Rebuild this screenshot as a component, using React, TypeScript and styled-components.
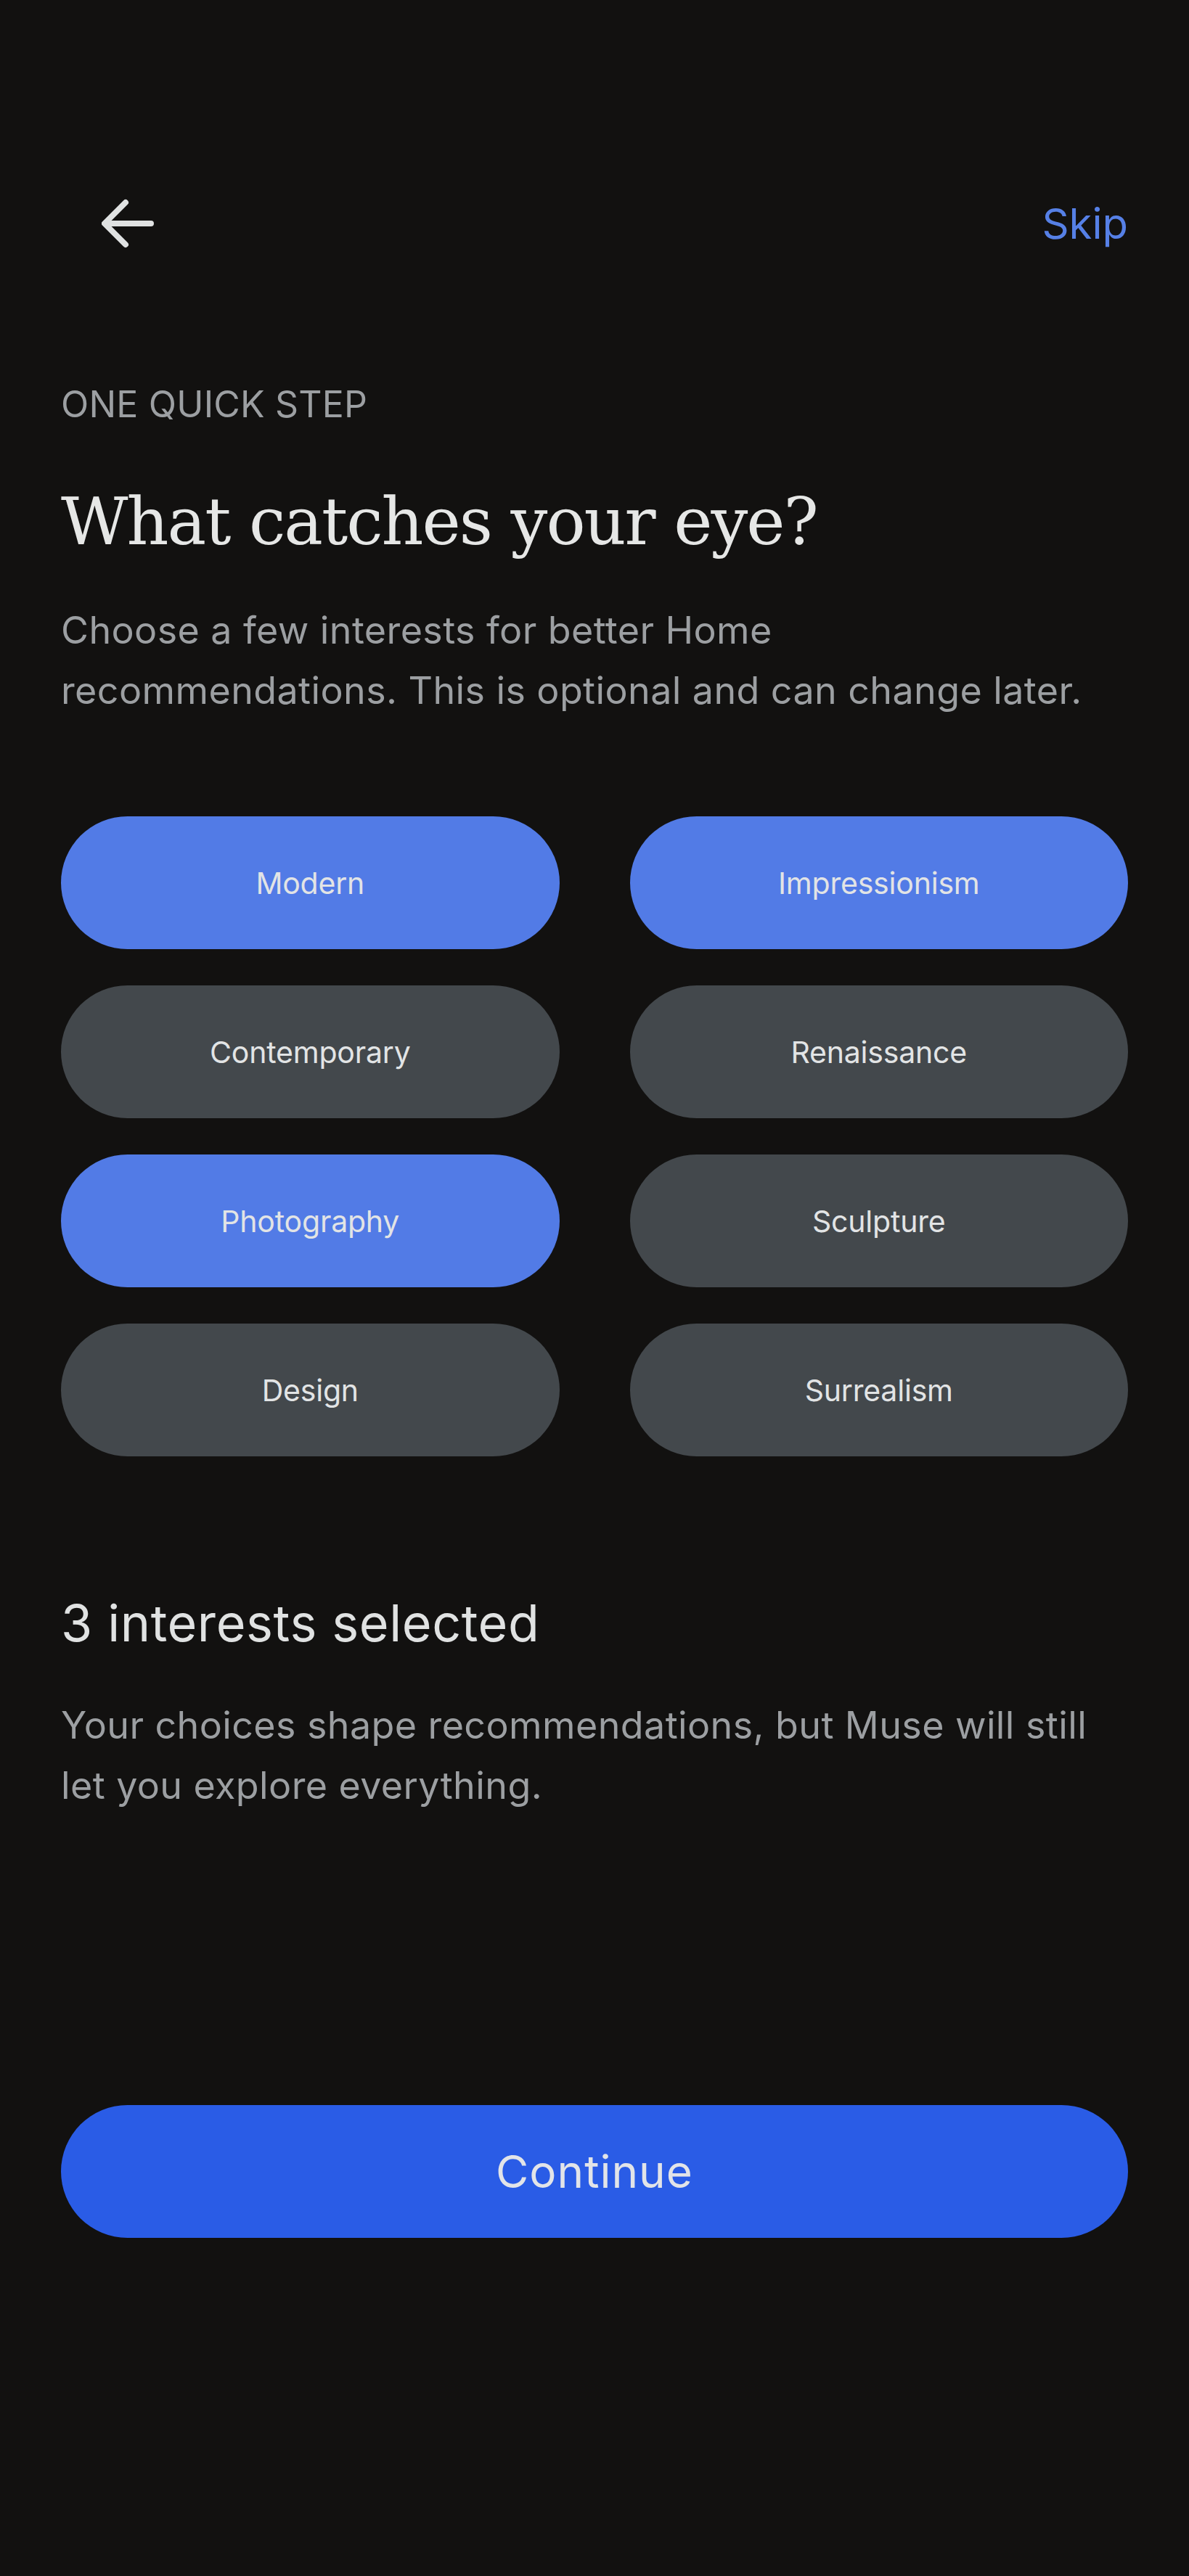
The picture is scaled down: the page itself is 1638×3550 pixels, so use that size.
import styled, { createGlobalStyle } from "styled-components";
import { useState } from "react";

const GlobalStyle = createGlobalStyle`
  html, body {
    margin: 0;
    padding: 0;
    background: #121110;
  }
  * {
    box-sizing: border-box;
  }
`;

const Screen = styled.div`
  width: 1638px;
  min-height: 3550px;
  background: #121110;
  padding: 248px 84px 0;
  font-family: Inter, "Noto Sans", sans-serif;
  color: #e0e2e2;
  display: flex;
  flex-direction: column;
`;

const Header = styled.div`
  display: flex;
  align-items: center;
  justify-content: space-between;
  height: 120px;
`;

const BackButton = styled.button`
  background: none;
  border: none;
  padding: 0;
  margin-left: 56px;
  width: 72px;
  height: 72px;
  cursor: pointer;
  color: #e0e2e2;
  display: flex;
`;

const SkipButton = styled.button`
  background: none;
  border: none;
  padding: 0;
  font-family: inherit;
  font-size: 58px;
  line-height: 70px;
  color: #5680e6;
  cursor: pointer;
  letter-spacing: 0;
`;

const Eyebrow = styled.div`
  margin-top: 159px;
  font-size: 50px;
  line-height: 60px;
  color: #9c9fa2;
  letter-spacing: 0.2px;
`;

const Title = styled.h1`
  margin: 77px 0 0;
  font-family: "DejaVu Serif", "Liberation Serif", serif;
  font-weight: 400;
  font-size: 90px;
  line-height: 110px;
  color: #e6e7e6;
  letter-spacing: -2px;
`;

// both paragraphs wrap a little before the column edge
const Lead = styled.p<{ $top: number }>`
  margin: ${(p) => p.$top}px 0 0;
  max-width: 1445px;
  font-size: 52px;
  line-height: 83px;
  color: #9c9fa2;
  letter-spacing: 0.4px;
`;

const ChipGrid = styled.div`
  margin-top: 132px;
  display: grid;
  grid-template-columns: 1fr 1fr;
  column-gap: 97px;
  row-gap: 50px;
`;

const Chip = styled.button<{ $on: boolean }>`
  height: 183px;
  border: none;
  border-radius: 92px;
  background: ${(p) => (p.$on ? "#527be6" : "#43484c")};
  color: #e2e4e5;
  font-family: inherit;
  font-size: 41px;
  letter-spacing: -0.2px;
  cursor: pointer;
  display: flex;
  align-items: center;
  justify-content: center;
`;

const Count = styled.h2`
  margin: 188px 0 0;
  font-size: 70px;
  font-weight: 400;
  line-height: 84px;
  color: #e0e2e2;
  letter-spacing: 0.6px;
`;

const ContinueButton = styled.button`
  margin-top: 399px;
  height: 183px;
  border: none;
  border-radius: 92px;
  background: #2a5ce6;
  color: #e2e4e8;
  font-family: inherit;
  font-size: 62px;
  letter-spacing: 1px;
  cursor: pointer;
`;

const interests = [
  "Modern",
  "Impressionism",
  "Contemporary",
  "Renaissance",
  "Photography",
  "Sculpture",
  "Design",
  "Surrealism",
];

const BackArrow = () => (
  <svg width="72" height="72" viewBox="0 0 72 72" fill="none">
    <path
      d="M68 36H6M33 7L4 36l29 29"
      stroke="currentColor"
      strokeWidth="8"
      strokeLinecap="round"
      strokeLinejoin="round"
    />
  </svg>
);

export default function App() {
  const [picked, setPicked] = useState<string[]>([
    "Modern",
    "Impressionism",
    "Photography",
  ]);

  const toggle = (name: string) => {
    setPicked((cur) =>
      cur.includes(name) ? cur.filter((n) => n !== name) : [...cur, name]
    );
  };

  return (
    <>
      <GlobalStyle />
      <Screen>
        <Header>
          <BackButton aria-label="Back">
            <BackArrow />
          </BackButton>
          <SkipButton>Skip</SkipButton>
        </Header>
        <Eyebrow>ONE QUICK STEP</Eyebrow>
        <Title>What catches your eye?</Title>
        <Lead $top={53}>
          Choose a few interests for better Home recommendations. This is
          optional and can change later.
        </Lead>
        <ChipGrid>
          {interests.map((name) => (
            <Chip
              key={name}
              $on={picked.includes(name)}
              onClick={() => toggle(name)}
            >
              {name}
            </Chip>
          ))}
        </ChipGrid>
        <Count>{picked.length} interests selected</Count>
        <Lead $top={57}>
          Your choices shape recommendations, but Muse will still let you
          explore everything.
        </Lead>
        <ContinueButton>Continue</ContinueButton>
      </Screen>
    </>
  );
}
